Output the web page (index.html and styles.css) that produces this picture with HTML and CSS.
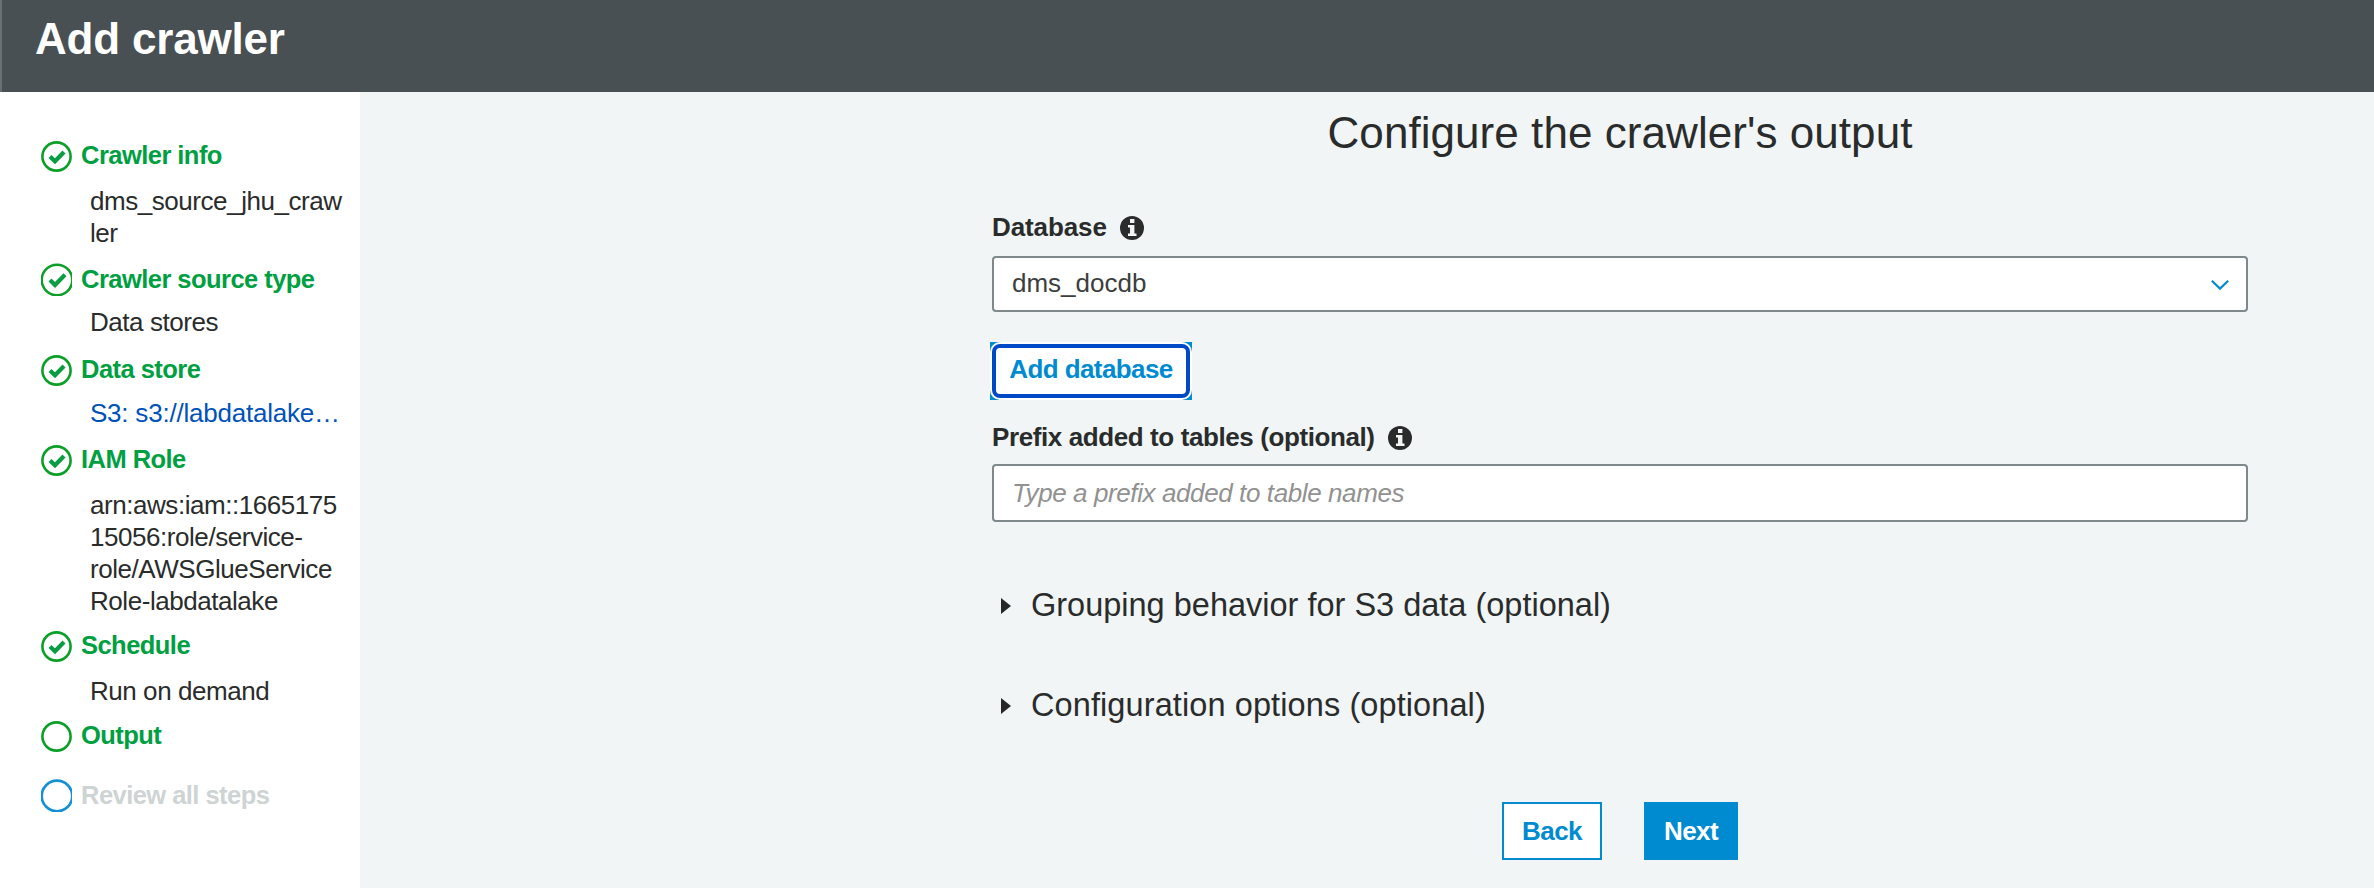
FILE: index.html
```html
<!DOCTYPE html>
<html lang="en">
<head>
<meta charset="utf-8">
<title>Add crawler</title>
<link rel="stylesheet" href="styles.css">
</head>
<body>
<svg class="defs" aria-hidden="true">
  <symbol id="done" viewBox="0 0 31 31"><circle cx="15.5" cy="15.5" r="14.1" fill="none" stroke="#0c9f28" stroke-width="2.6"/><path d="M9 15.500l5 4.800 9-9.300" fill="none" stroke="#0a9c40" stroke-width="4.200"/></symbol>
  <symbol id="open" viewBox="0 0 31 31"><circle cx="15.5" cy="15.5" r="14.1" fill="none" stroke="#0c9f28" stroke-width="2.6"/></symbol>
  <symbol id="info" viewBox="0 0 24 24"><circle cx="12" cy="12" r="12" fill="#2a2c2c"/><path d="M10 3h4.4v4H10zM8 9h6.4v8.500H16.500V20H8v-2.500h2V11.500H8z" fill="#f1f5f6"/></symbol>
</svg>
<header class="topbar"><h1 class="topbar__title">Add crawler</h1></header>
<div class="layout">
  <nav class="sidebar">
    <ol class="steps">
      <li class="step"><div class="step__head"><svg class="step__icon"><use href="#done"/></svg><span>Crawler info</span></div>
        <div class="step__detail step__detail--low">dms_source_jhu_craw<br>ler</div></li>
      <li class="step step--type"><div class="step__head"><svg class="step__icon step__icon--cut" viewBox="0 0 31 33"><circle cx="16" cy="17" r="15.300" fill="none" stroke="#0c9f28" stroke-width="2.6"/><path d="M9 17l5 5 10-10.300" fill="none" stroke="#0a9c40" stroke-width="4.200"/></svg><span>Crawler source type</span></div>
        <div class="step__detail step__detail--high">Data stores</div></li>
      <li class="step"><div class="step__head"><svg class="step__icon"><use href="#done"/></svg><span>Data store</span></div>
        <div class="step__detail"><a class="link">S3: s3://labdatalake…</a></div></li>
      <li class="step step--tight"><div class="step__head"><svg class="step__icon"><use href="#done"/></svg><span>IAM Role</span></div>
        <div class="step__detail step__detail--low">arn:aws:iam::1665175<br>15056:role/service-<br>role/AWSGlueService<br>Role-labdatalake</div></li>
      <li class="step step--tight"><div class="step__head"><svg class="step__icon"><use href="#done"/></svg><span>Schedule</span></div>
        <div class="step__detail step__detail--low">Run on demand</div></li>
      <li class="step step--empty"><div class="step__head"><svg class="step__icon"><use href="#open"/></svg><span>Output</span></div></li>
      <li class="step"><div class="step__head step__head--todo"><svg class="step__icon step__icon--cut" viewBox="0 0 31 33"><circle cx="16" cy="17" r="15.300" fill="none" stroke="#1590d6" stroke-width="2.700"/></svg><span>Review all steps</span></div></li>
    </ol>
  </nav>
  <main class="main">
    <div class="form">
      <h2 class="form__title">Configure the crawler's output</h2>
      <div class="label"><span>Database</span><svg class="label__icon"><use href="#info"/></svg></div>
      <div class="field field--select"><span>dms_docdb</span><svg class="chevron" viewBox="0 0 18 10"><path d="M.8.8L9 8.600 17.200.8" fill="none" stroke="#008bd0" stroke-width="2.200"/></svg></div>
      <button class="add"><span class="add__halo"><span class="add__ring">Add database</span></span></button>
      <div class="label label--prefix"><span>Prefix added to tables (optional)</span><svg class="label__icon"><use href="#info"/></svg></div>
      <div class="field field--input">Type a prefix added to table names</div>
      <div class="disclosure"><svg class="disclosure__arrow" viewBox="0 0 10 16"><path d="M0 0l10 8-10 8z" fill="#252727"/></svg><span>Grouping behavior for S3 data (optional)</span></div>
      <div class="disclosure disclosure--config"><svg class="disclosure__arrow" viewBox="0 0 10 16"><path d="M0 0l10 8-10 8z" fill="#252727"/></svg><span>Configuration options (optional)</span></div>
      <div class="actions"><button class="btn">Back</button><button class="btn btn--primary">Next</button></div>
    </div>
  </main>
</div>
</body>
</html>
```

FILE: styles.css
```css
* { box-sizing: border-box; }
body {
  margin: 0;
  height: 888px;
  overflow: hidden;
  background: #f1f5f6;
  color: #2a2c2c;
  font: 26px/32px "Liberation Sans", Arial, sans-serif;
}
button { font: inherit; margin: 0; }
.defs { display: none; }
.topbar {
  height: 92px;
  padding-left: 33px;
  background: #485053;
  border-left: 2px solid #687073;
}
.topbar__title {
  margin: 0;
  padding-top: 9px;
  color: #fff;
  font-size: 44px;
  line-height: 60px;
  letter-spacing: -0.2px;
}
.layout { display: flex; height: 796px; }
.sidebar { width: 360px; flex: none; padding: 47px 0 0 41px; background: #fff; }
.steps { margin: 0; padding: 0; list-style: none; }
.step { padding-bottom: 14px; }
.step--type { padding-bottom: 15px; }
.step--tight { padding-bottom: 12px; }
.step--empty { padding-bottom: 28px; }
.step__head {
  display: flex;
  gap: 9px;
  height: 32px;
  color: #009f41;
  font-weight: bold;
  font-size: 25.5px;
  letter-spacing: -0.54px;
  white-space: nowrap;
}
.step__head--todo { color: #ced3d4; }
.step__icon { width: 31px; height: 31px; margin-top: 2px; flex: none; }
.step__icon--cut { height: 33px; margin-top: 0; }
.step__detail { padding: 12px 0 0 49px; letter-spacing: -0.45px; white-space: nowrap; }
.step__detail--low { padding-top: 14px; }
.step__detail--high { padding-top: 11px; }
.link { color: #0052b8; letter-spacing: -0.22px; }
.main { flex: 1; padding: 11px 0 0 632px; }
.form { width: 1256px; display: flex; flex-direction: column; }
.form__title {
  margin: 0 0 48px;
  font-size: 44px;
  line-height: 60px;
  letter-spacing: 0.06px;
  font-weight: normal;
  text-align: center;
}
.label { display: flex; align-items: center; gap: 13px; height: 32px; font-weight: bold; letter-spacing: -0.1px; }
.label__icon { width: 24px; height: 24px; margin-top: 2px; }
.label--prefix { margin-top: 21px; letter-spacing: -0.4px; }
.field {
  display: flex;
  align-items: center;
  padding: 0 18px;
  border: 2px solid #7f898c;
  border-radius: 4px;
  background: #fff;
}
.field--select { height: 56px; margin-top: 13px; padding-right: 17px; padding-bottom: 2px; justify-content: space-between; color: #3c3e3e; }
.chevron { width: 18px; height: 10px; margin-top: 4px; }
.field--input { height: 58px; margin-top: 11px; color: #919191; font-style: italic; letter-spacing: -0.4px; }
.add {
  width: 202px;
  height: 58px;
  margin: 30px 0 0 -2px;
  padding: 0;
  border: 0;
  background: #008bd0;
}
.add__halo { display: block; height: 58px; padding: 2px; border-radius: 10px; background: #fff; }
.add__ring {
  display: flex;
  align-items: center;
  justify-content: center;
  height: 54px;
  padding-bottom: 5px;
  border: 4px solid #0049c6;
  border-radius: 8px;
  color: #008bd0;
  font-weight: bold;
  letter-spacing: -0.6px;
}
.disclosure {
  display: flex;
  align-items: center;
  gap: 20px;
  height: 40px;
  margin-top: 60px;
  padding-left: 9px;
  font-size: 32.5px;
  line-height: 40px;
}
.disclosure--config { letter-spacing: 0.1px; }
.field + .disclosure { margin-top: 63px; }
.disclosure__arrow { width: 10px; height: 16px; margin-top: 2px; }
.actions { display: flex; gap: 42px; justify-content: center; margin-top: 77px; }
.btn {
  width: 100px;
  height: 58px;
  padding: 0;
  border: 2px solid #008bd0;
  background: #fff;
  color: #008bd0;
  font-weight: bold;
  letter-spacing: -0.6px;
}
.btn--primary { width: 94px; background: #008bd0; color: #fff; }
```
